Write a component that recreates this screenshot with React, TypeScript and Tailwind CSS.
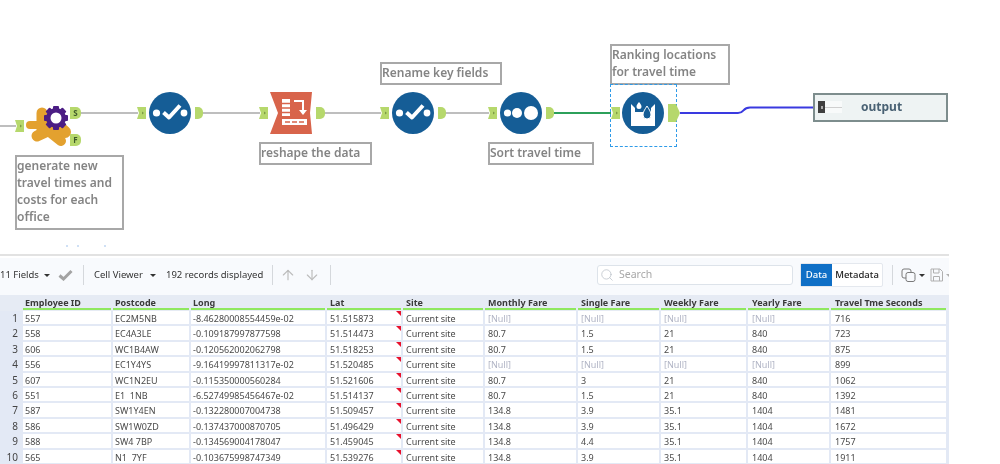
import { ArrowDown, ArrowUp, Search } from 'lucide-react'

const columns = [
  'Employee ID',
  'Postcode',
  'Long',
  'Lat',
  'Site',
  'Monthly Fare',
  'Single Fare',
  'Weekly Fare',
  'Yearly Fare',
  'Travel Tme Seconds',
]

const rows = [
  ['557', 'EC2M5NB', '-8.46280008554459e-02', '51.515873', 'Current site', '[Null]', '[Null]', '[Null]', '[Null]', '716'],
  ['558', 'EC4A3LE', '-0.109187997877598', '51.514473', 'Current site', '80.7', '1.5', '21', '840', '723'],
  ['606', 'WC1B4AW', '-0.120562002062798', '51.518253', 'Current site', '80.7', '1.5', '21', '840', '875'],
  ['556', 'EC1Y4YS', '-9.16419997811317e-02', '51.520485', 'Current site', '[Null]', '[Null]', '[Null]', '[Null]', '899'],
  ['607', 'WC1N2EU', '-0.115350000560284', '51.521606', 'Current site', '80.7', '3', '21', '840', '1062'],
  ['551', 'E1  1NB', '-6.52749985456467e-02', '51.514137', 'Current site', '80.7', '1.5', '21', '840', '1392'],
  ['587', 'SW1Y4EN', '-0.132280007004738', '51.509457', 'Current site', '134.8', '3.9', '35.1', '1404', '1481'],
  ['586', 'SW1W0ZD', '-0.137437000870705', '51.496429', 'Current site', '134.8', '3.9', '35.1', '1404', '1672'],
  ['588', 'SW4 7BP', '-0.134569004178047', '51.459045', 'Current site', '134.8', '4.4', '35.1', '1404', '1757'],
  ['565', 'N1  7YF', '-0.103675998747349', '51.539276', 'Current site', '134.8', '3.9', '35.1', '1404', '1911'],
]

const gridCols = 'grid grid-cols-[23px_90px_78px_136px_76px_82px_93px_83px_87px_83px_117px]'

// text inset differs a little per column in the reference
function cellPad(j: number) {
  if (j < 3) return 'pl-[2px]'
  if (j < 8) return 'pl-[3px]'
  return 'pl-[4px]'
}

function InAnchor({ className }: { className: string }) {
  return (
    <svg className={`absolute ${className}`} width="9" height="12" viewBox="0 0 9 12">
      <path d="M0 0H9V12H0L2 6Z" fill="#b6d86c" />
      <path d="M5 4.5L7 6L5 7.5Z" fill="#7d9a45" />
    </svg>
  )
}

function OutAnchor({ className, label }: { className: string; label?: string }) {
  return (
    <div className={`absolute h-[12px] bg-[#b6d86c] rounded-r-[5px] flex items-center justify-center text-[8px] font-bold text-[#3f5a2a] leading-none ${className}`}>
      {label}
    </div>
  )
}

function Circle({ className, children }: { className: string; children: React.ReactNode }) {
  return (
    <svg className={`absolute ${className}`} width="42" height="42" viewBox="0 0 42 42">
      <circle cx="21" cy="21" r="21" fill="#155d96" />
      {children}
    </svg>
  )
}

function CheckGlyph() {
  return (
    <>
      <circle cx="7.5" cy="21" r="3.6" fill="#fff" />
      <circle cx="35" cy="21" r="3.4" fill="#fff" />
      <path d="M14.5 20.5L20 25.5L31 13.5" fill="none" stroke="#fff" strokeWidth="4" strokeLinejoin="round" />
    </>
  )
}

function Note({ className, children }: { className: string; children: React.ReactNode }) {
  return (
    <div className={`absolute border-2 border-[#a8a8a8] bg-white text-[12px] font-semibold leading-[17px] text-[#848484] ${className}`}>
      {children}
    </div>
  )
}

function Canvas() {
  return (
    <div className="relative h-[254px] w-[1000px] overflow-hidden bg-white">
      {/* wires */}
      <svg className="absolute left-0 top-0" width="1000" height="254" fill="none">
        <path d="M0 126H16" stroke="#a9a9a9" strokeWidth="1.5" />
        <path d="M80 113H138M203 113H260M324 113H381M446 113H489" stroke="#a9a9a9" strokeWidth="1.5" />
        <path d="M554 113H611" stroke="#2ca05a" strokeWidth="2" />
        <path d="M680 113H738C745 113 742 107.5 750 107.5H813" stroke="#3a3ae0" strokeWidth="2" />
      </svg>

      <InAnchor className="left-[15px] top-[120px]" />
      {/* formula tool blob */}
      <svg className="absolute left-[26px] top-[106px]" width="46" height="42" viewBox="0 0 46 42" fill="none" stroke="#e3a12f" strokeLinecap="round">
        <path d="M4 19H34" strokeWidth="8" />
        <path d="M16 7V24" strokeWidth="11" />
        <path d="M11 30L24 24" strokeWidth="11" />
        <path d="M25 27L35 35" strokeWidth="10" />
        <path d="M30 18L39 26" strokeWidth="12" />
      </svg>
      <svg className="absolute left-[43px] top-[105px]" width="26" height="26" viewBox="0 0 26 26">
        <g fill="#4b1d84">
          <circle cx="13" cy="13" r="10" />
          <rect x="10" y="1" width="6" height="24" rx="1" />
          <rect x="10" y="1" width="6" height="24" rx="1" transform="rotate(45 13 13)" />
          <rect x="10" y="1" width="6" height="24" rx="1" transform="rotate(90 13 13)" />
          <rect x="10" y="1" width="6" height="24" rx="1" transform="rotate(135 13 13)" />
        </g>
        <circle cx="13" cy="13" r="5.5" fill="#fff" />
      </svg>
      <OutAnchor className="left-[70px] top-[107px] w-[11px]" label="S" />
      <OutAnchor className="left-[70px] top-[134px] w-[11px]" label="F" />
      <Note className="left-[15px] top-[155px] h-[75px] w-[109px]">
        generate new
        <br />
        travel times and
        <br />
        costs for each
        <br />
        office
      </Note>

      {/* faint leftovers under the note */}
      <div className="absolute left-[66px] top-[245px] h-[2px] w-[2px] bg-[#cfe0f5]" />
      <div className="absolute left-[77px] top-[245px] h-[2px] w-[2px] bg-[#cfe0f5]" />
      <div className="absolute left-[104px] top-[245px] h-[2px] w-[2px] bg-[#cfe0f5]" />

      <InAnchor className="left-[137px] top-[107px]" />
      <Circle className="left-[149px] top-[92px]">
        <CheckGlyph />
      </Circle>
      <OutAnchor className="left-[195px] top-[107px] w-[8px]" />

      <InAnchor className="left-[259px] top-[107px]" />
      <svg className="absolute left-[270px] top-[92px]" width="43" height="42" viewBox="0 0 43 42">
        <path d="M0 0H42L40 21L42 42H0L8 21Z" fill="#d8644b" />
        <path d="M12 7H20V24H12Z" fill="#fff" />
        <path d="M12 11.5H20M12 16H20M12 20.5H20" stroke="#d8644b" strokeWidth="1.5" />
        <path d="M24 9H33V19" fill="none" stroke="#fff" strokeWidth="2" />
        <path d="M29 18H37L33 23Z" fill="#fff" />
        <rect x="12" y="27" width="25" height="6" fill="#fff" />
        <path d="M15 30H20M22 30H27M29 30H34" stroke="#d8644b" strokeWidth="1.5" />
      </svg>
      <OutAnchor className="left-[316px] top-[107px] w-[9px]" />
      <Note className="left-[259px] top-[142px] h-[23px] w-[113px]">reshape the data</Note>

      <Note className="left-[380px] top-[62px] h-[23px] w-[122px] text-[#8a8070]">Rename key fields</Note>
      <InAnchor className="left-[380px] top-[107px]" />
      <Circle className="left-[392px] top-[92px]">
        <CheckGlyph />
      </Circle>
      <OutAnchor className="left-[438px] top-[107px] w-[8px]" />

      <InAnchor className="left-[488px] top-[107px]" />
      <Circle className="left-[500px] top-[92px]">
        <circle cx="7.5" cy="21" r="3.6" fill="#fff" />
        <circle cx="17" cy="21" r="5" fill="#fff" />
        <circle cx="31" cy="21" r="7" fill="#fff" />
      </Circle>
      <OutAnchor className="left-[546px] top-[107px] w-[8px]" />
      <Note className="left-[488px] top-[142px] h-[23px] w-[106px]">Sort travel time</Note>

      <Note className="left-[610px] top-[44px] h-[41px] w-[120px]">
        Ranking locations
        <br />
        for travel time
      </Note>
      <div className="absolute left-[610px] top-[84px] h-[63px] w-[67px] border border-dashed border-[#2f9be8]" />
      <InAnchor className="left-[611px] top-[107px]" />
      {/* rank tool: bucket with two drops */}
      <Circle className="left-[622px] top-[92px]">
        <path d="M9 12L13 16V20H29V16L33 12V34H9Z" fill="#fff" />
        <path d="M17 10C18.5 12 19.5 13 19.5 14.5A2.5 2.5 0 0 1 14.5 14.5C14.5 13 15.5 12 17 10Z" fill="#fff" />
        <path d="M25 14C27.5 18 29 20 29 23A4 4 0 0 1 21 23C21 20 22.5 18 25 14Z" fill="#155d96" stroke="#fff" strokeWidth="1" />
      </Circle>
      <svg className="absolute left-[668px] top-[104px]" width="12" height="18" viewBox="0 0 12 18">
        <path d="M0 0H8L12 9L8 18H0Z" fill="#b6d86c" />
      </svg>

      {/* output tool */}
      <div className="absolute left-[813px] top-[93px] flex h-[29px] w-[135px] items-center border-2 border-[#7d8d8d] bg-[#eef3f3] pb-px pl-[3px]">
        <div className="flex h-[12px] w-[24px] items-center bg-[#f8fafa]">
          <div className="flex h-[12px] w-[7px] items-center justify-center bg-[#3f3f3f]">
            <div className="h-[3px] w-[2px] bg-[#aaa]" />
          </div>
          <div className="h-px flex-1 bg-[#cfcfcf]" />
        </div>
        <span className="ml-[19px] text-[12px] font-bold text-[#4a6274]">output</span>
      </div>
    </div>
  )
}

function Caret({ className }: { className: string }) {
  return <span className={`h-0 w-0 border-x-[3px] border-t-[3px] border-x-transparent border-t-[#333] ${className}`} />
}

function Sep({ className }: { className: string }) {
  return <span className={`h-[20px] w-px bg-[#d5d8dc] ${className}`} />
}

function Toolbar() {
  return (
    <div className="flex h-[37px] w-[949px] items-center overflow-hidden bg-[#f8fafd] pb-[3px] text-[9.5px] text-[#333] [&>*]:shrink-0">
      <span className="w-[36px] whitespace-nowrap">11 Fields</span>
      <Caret className="ml-[8px]" />
      <svg className="ml-[8px]" width="15" height="12" viewBox="0 0 15 12">
        <path d="M1.5 6.5L5.5 10L13.5 2" fill="none" stroke="#a3a3a3" strokeWidth="3" />
      </svg>
      <Sep className="ml-[10px]" />
      <span className="ml-[10px] w-[56px] whitespace-nowrap">Cell Viewer</span>
      <Caret className="ml-0" />
      <span className="ml-[10px] w-[106px] whitespace-nowrap">192 records displayed</span>
      <Sep className="ml-0" />
      <ArrowUp className="ml-[7px] text-[#bcbcbc]" size={16} strokeWidth={1.75} />
      <ArrowDown className="ml-[8px] text-[#bcbcbc]" size={16} strokeWidth={1.75} />
      <Sep className="ml-[10px]" />
      <div className="ml-[266px] flex h-[20px] w-[196px] items-center rounded-[3px] border border-[#dde3ea] bg-white pl-[2px] text-[10.5px] text-[#a8a8a8]">
        <Search className="text-[#b8bec6]" size={14} strokeWidth={1.25} />
        <span className="ml-[5px]">Search</span>
      </div>
      <div className="ml-[7px] flex h-[24px] w-[83px] items-center rounded-[2px] border border-[#e4e8ee] bg-white text-[9.5px] font-medium">
        <span className="flex h-full w-[31px] items-center justify-center bg-[#0f6fc6] text-white">Data</span>
        <span className="flex-1 text-center text-[#222]">Metadata</span>
      </div>
      <Sep className="ml-[9px]" />
      <svg className="ml-[8px]" width="16" height="14" viewBox="0 0 16 14" fill="none" stroke="#7a7a7a">
        <rect x="1" y="1" width="9" height="9" rx="2" />
        <rect x="5" y="4.5" width="9" height="9" rx="2" fill="#f8fafd" />
      </svg>
      <Caret className="ml-[2px]" />
      <svg className="ml-[5px]" width="13" height="14" viewBox="0 0 13 14" fill="none" stroke="#b0b0b0">
        <path d="M1 1H10L12.5 3.5V13H1Z" />
        <path d="M3.5 1V5H9V1M3.5 13V8.5H9.5V13" />
      </svg>
      <Caret className="ml-[3px] border-t-[#b0b0b0]" />
    </div>
  )
}

function Table() {
  return (
    <div className="w-[949px] overflow-hidden text-[9px] text-[#4a4a4a]">
      <div className={`${gridCols} h-[16px] bg-[#e6ebf4]`}>
        <div />
        {columns.map((c, j) => (
          <div key={c} className={`mr-[2px] flex h-[15px] items-center whitespace-nowrap border-b-2 border-[#8fe85f] pt-[2px] text-[9px] font-bold text-[#3a3a3a] ${cellPad(j)}`}>
            {c}
          </div>
        ))}
      </div>
      {rows.map((row, i) => (
        <div key={row[0]} className={`${gridCols} h-[15.4px] bg-[#e3e9f5]`}>
          <div className="pr-[5px] text-right text-[10px] leading-[14px] text-[#444]">{i + 1}</div>
          {row.map((cell, j) => (
            <div
              key={j}
              className={`relative mb-[2px] mr-[2px] h-[13.4px] whitespace-pre bg-white leading-[15px] ${cellPad(j)} ${cell === '[Null]' ? 'text-[#b0b4c4]' : ''}`}
            >
              {cell}
              {j === 3 && <span className="absolute right-0 top-0 h-0 w-0 border-l-[5px] border-t-[5px] border-l-transparent border-t-[#e8112d]" />}
            </div>
          ))}
        </div>
      ))}
    </div>
  )
}

export default function App() {
  return (
    <div className="h-[464px] w-[1000px] overflow-hidden bg-white font-['Roboto',sans-serif] blur-[0.4px]">
      <Canvas />
      <div className="h-[4px] w-[949px] border-t-2 border-[#e2e2e2] bg-white" />
      <Toolbar />
      <Table />
    </div>
  )
}
